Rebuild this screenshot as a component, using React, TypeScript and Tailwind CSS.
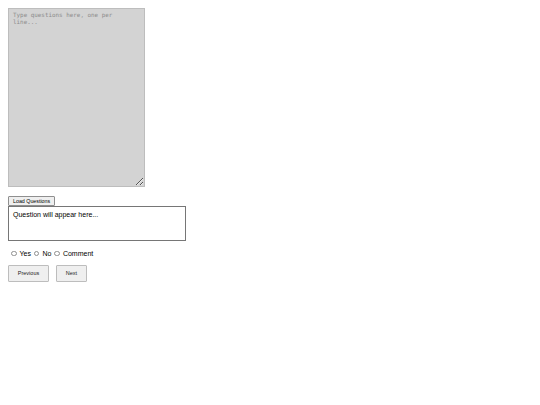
import React, { useState } from 'react';

const App: React.FC = () => {
  const [answer, setAnswer] = useState('');

  return (
    <div className="p-2 font-['Liberation_Sans',Arial,sans-serif] text-black bg-white min-h-screen">
      <textarea
        placeholder="Type questions here, one per line..."
        className="block w-[137px] h-[179px] bg-[#d3d3d3] border border-[#bdbdbd] pl-[4px] pr-[14px] pt-[3px] text-[5.9px] leading-[7px] font-['DejaVu_Sans_Mono',monospace] text-[#555] placeholder:text-[#8c8c8c] resize"
      />
      <button className="mt-[9px] block h-[10px] px-[4px] text-[5.3px] leading-[8px] bg-[#efefef] border border-[#8f8f8f] rounded-[1px]">
        Load Questions
      </button>
      <div className="w-[178px] h-[35px] border border-[#767676] px-[4px] py-[3px] text-[7px] leading-[9px]">
        Question will appear here...
      </div>
      <div className="mt-[8px] flex items-center text-[7px] leading-[9px]">
        {['Yes', 'No', 'Comment'].map((opt) => (
          <label key={opt} className="flex items-center">
            <input
              type="radio"
              name="answer"
              checked={answer === opt}
              onChange={() => setAnswer(opt)}
              className="w-[5.5px] h-[5.5px] m-0 ml-[3px] mr-[3px] appearance-none rounded-full border border-[#8f8f8f] bg-white"
            />
            {opt}
          </label>
        ))}
      </div>
      <div className="mt-[7px] flex gap-[7px]">
        <button className="w-[41px] h-[17px] text-[5.5px] text-[#222] bg-[#efefef] border border-[#bdbdbd] rounded-[1px]">Previous</button>
        <button className="w-[31px] h-[17px] text-[5.5px] text-[#222] bg-[#efefef] border border-[#bdbdbd] rounded-[1px]">Next</button>
      </div>
    </div>
  );
};

export default App;
